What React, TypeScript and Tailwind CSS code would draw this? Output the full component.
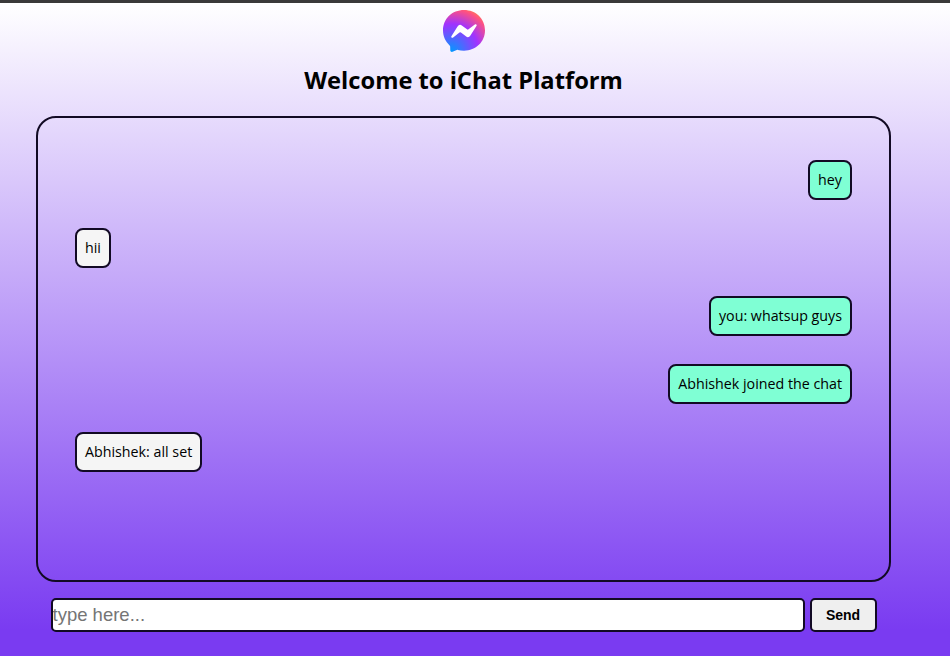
const messages = [
  { text: "hey", mine: true },
  { text: "hii", mine: false },
  { text: "you: whatsup guys", mine: true },
  { text: "Abhishek joined the chat", mine: true },
  { text: "Abhishek: all set", mine: false },
];

const MessengerLogo = () => (
  <svg viewBox="0 0 24 24" className="h-[42px] w-[42px]">
    <defs>
      <radialGradient id="messenger" cx="19.25%" cy="99.47%" r="108.96%">
        <stop offset="0%" stopColor="#0099ff" />
        <stop offset="60.97%" stopColor="#a033ff" />
        <stop offset="93.48%" stopColor="#ff5280" />
        <stop offset="100%" stopColor="#ff7061" />
      </radialGradient>
    </defs>
    <path
      fill="url(#messenger)"
      d="M12 0C5.24 0 0 4.95 0 11.64c0 3.5 1.43 6.52 3.77 8.6.2.18.31.42.32.68l.06 2.14c.02.68.72 1.12 1.34.85l2.38-1.05c.2-.09.43-.1.64-.05 1.1.3 2.26.46 3.49.46 6.76 0 12-4.95 12-11.64S18.76 0 12 0z"
    />
    <path
      fill="#ffffff"
      d="M4.8 15.04l3.52-5.59a1.8 1.8 0 0 1 2.6-.48l2.8 2.1a.72.72 0 0 0 .87 0l3.78-2.87c.5-.38 1.16.22.82.75l-3.52 5.59a1.8 1.8 0 0 1-2.6.48l-2.8-2.1a.72.72 0 0 0-.87 0l-3.78 2.87c-.5.38-1.16-.22-.82-.75z"
    />
  </svg>
);

const App = () => {
  return (
    <div className="h-[656px] overflow-hidden border-t-[3px] border-[#3a3a3a] bg-[linear-gradient(to_bottom,#ffffff,#7a3bf1_96%)] font-['Open_Sans','Noto_Sans',sans-serif] text-black">
      <div className="flex w-[927px] flex-col items-center">
        <div className="mt-[7px] flex h-[42px] items-center">
          <MessengerLogo />
        </div>
        <h1 className="mt-[10px] h-[36px] text-[23.7px] leading-[36px] font-bold">
          Welcome to iChat Platform
        </h1>

        <div className="mt-[18px] flex h-[466px] w-[855px] flex-col gap-[28px] rounded-[20px] border-2 border-[#120a24] px-[37px] pt-[42px]">
          {messages.map((message) => (
            <div
              key={message.text}
              className={message.mine ? "flex justify-end" : "flex justify-start"}
            >
              <p
                className={`h-[40px] rounded-[8px] border-2 border-[#120a24] px-[8px] text-[14.25px] leading-[36px] ${
                  message.mine ? "bg-[#7fffd4]" : "bg-[#f5f5f5]"
                }`}
              >
                {message.text}
              </p>
            </div>
          ))}
        </div>

        <form className="mt-[16px] flex w-[826px] gap-[5px]">
          <input
            placeholder="type here..."
            className="h-[34px] w-[755px] rounded-[5px] border-2 border-[#120a24] bg-white px-0 font-['Liberation_Sans',sans-serif] text-[18.5px] placeholder:text-[#757575]"
          />
          <button
            type="button"
            className="h-[34px] w-[67px] rounded-[5px] border-2 border-[#120a24] bg-[#efefef] font-['Liberation_Sans',sans-serif] text-[14px] font-bold"
          >
            Send
          </button>
        </form>
      </div>
    </div>
  );
};

export default App;
